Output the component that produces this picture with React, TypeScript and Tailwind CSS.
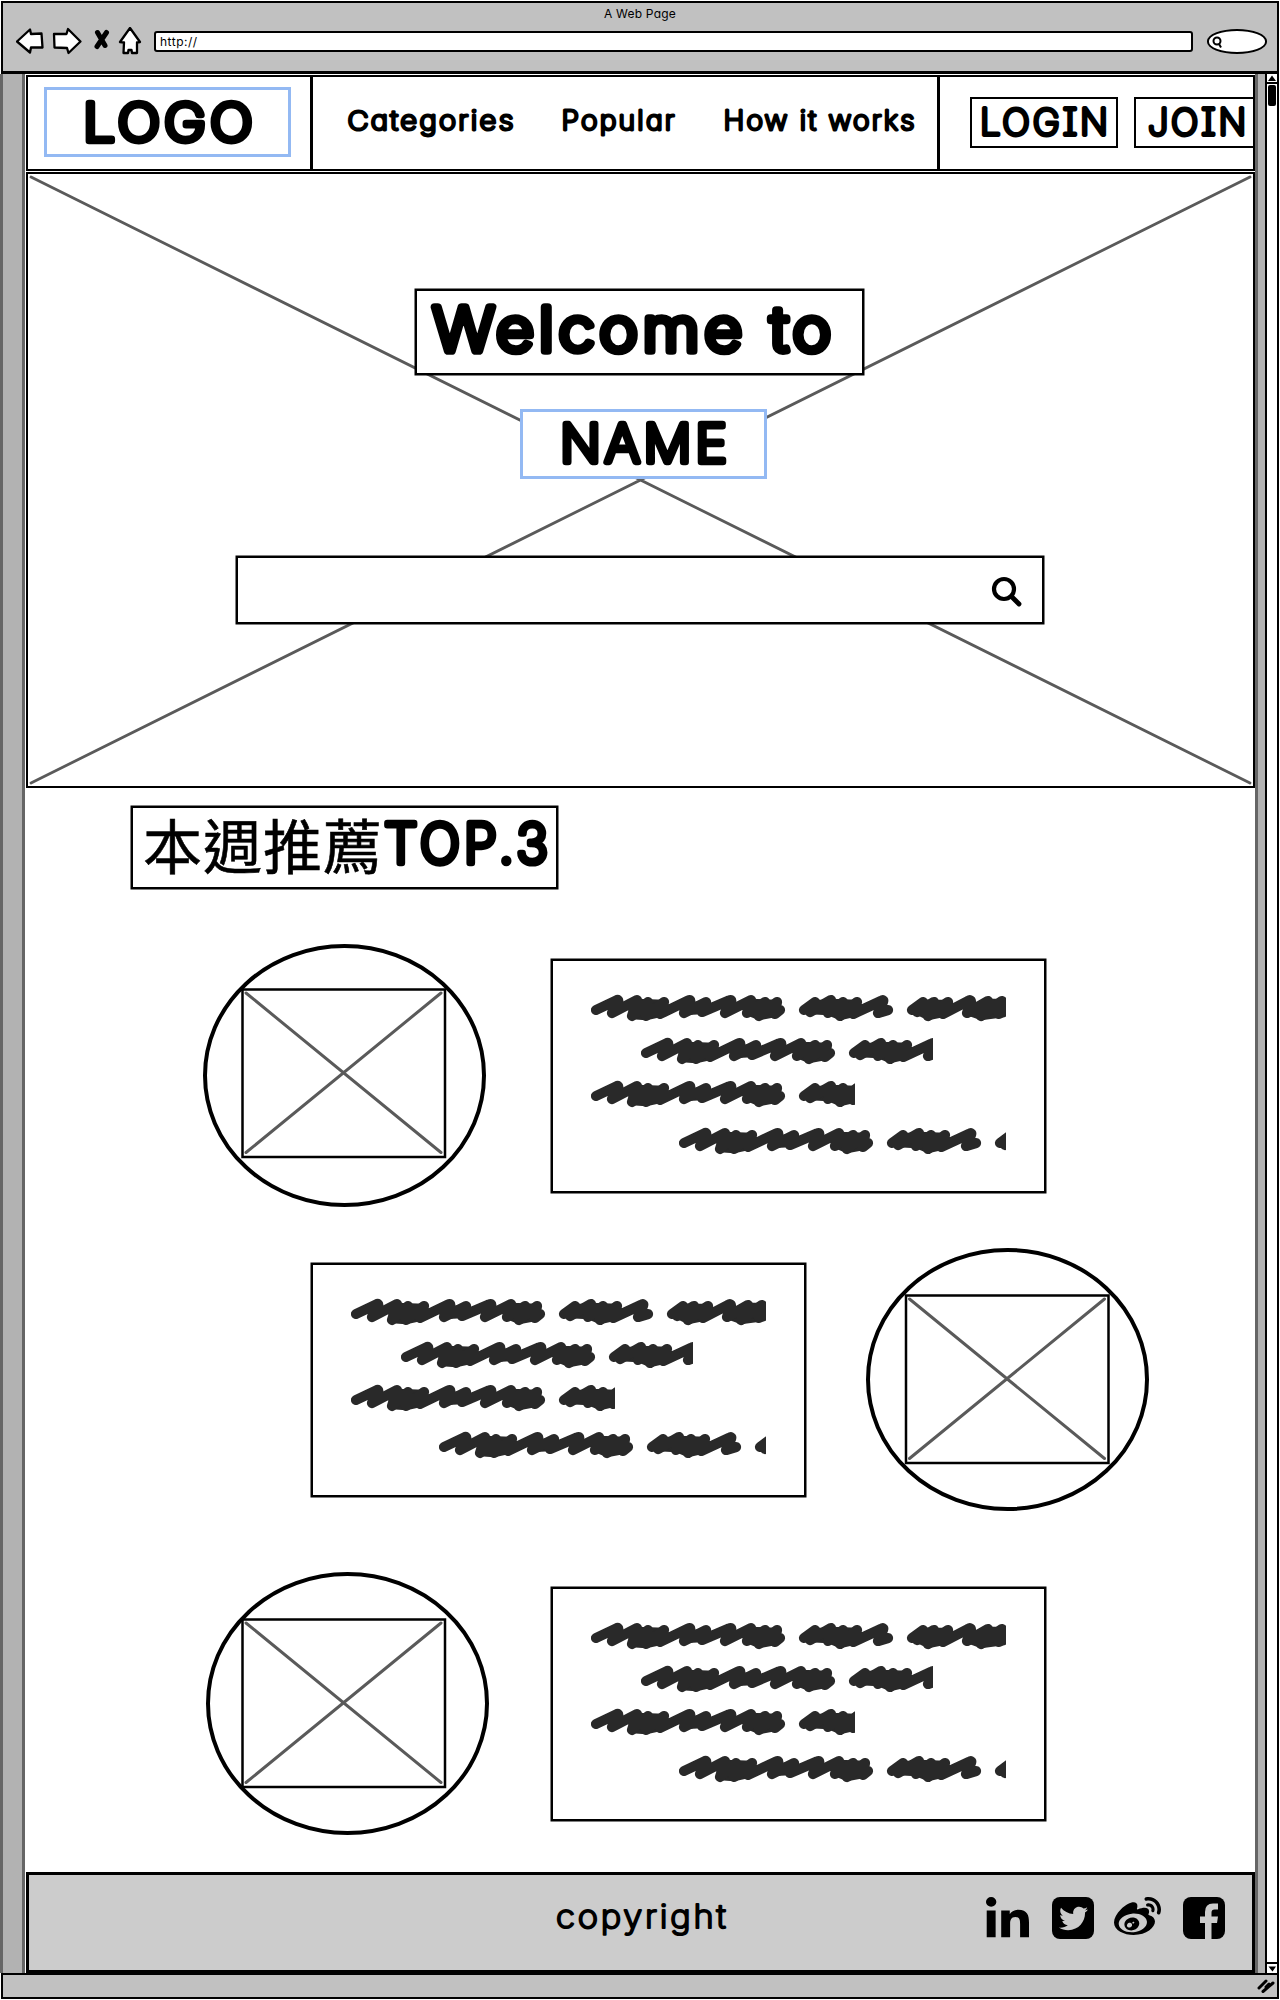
import { FaLinkedinIn, FaTwitter, FaWeibo } from "react-icons/fa";

type LetteringProps = {
  text: string;
  width: number;
  height: number;
  stroke: number;
  serifI?: boolean;
  className?: string;
};

/* Marker-style lettering: a light face thickened by a round pen. Height is the capital height. */
function Lettering({ text, width, height, stroke, serifI, className = "" }: LetteringProps) {
  const fontSize = (height - stroke) / 0.727;
  return (
    <svg width={width} height={height} className={`block shrink-0 overflow-visible ${className}`}>
      <text
        x={stroke / 2 - 2}
        y={height - stroke / 2}
        textLength={width - stroke + 4 + fontSize * 0.08}
        lengthAdjust="spacingAndGlyphs"
        letterSpacing={fontSize * 0.08}
        fontSize={fontSize}
        strokeWidth={stroke}
        strokeLinejoin="round"
        strokeLinecap="round"
        className={
          serifI
            ? "fill-black stroke-black font-['Inter',sans-serif] font-extralight [font-feature-settings:'cv11','cv08']"
            : "fill-black stroke-black font-['Inter',sans-serif] font-extralight [font-feature-settings:'cv11']"
        }
      >
        {text}
      </text>
    </svg>
  );
}

const scribble =
  "M5 17L25 7.500Q28 6 27 9L21 20L46 7L41 23L57 9L55 23L73 9L69 21L97 7.500Q100 6 99 9L93 20L115 9L111 19L138 7.500Q141 6 140 9L134 20L160 7L156 20L174 9L168 23L186 9L184 21L189 17" +
  "M213 17L224 9L219 19L240 7L237 20L252 9L249 23L266 9L262 21L290 8Q293 6 292 9L287 20L297 17" +
  "M321 17L332 9L326 19L343 9L337 23L357 9L352 21L377 8Q380 6 380 9L376 20L397 8L390 23L411 8L408 21L413 18";

const scribbleFill =
  "M41 24L46 8L73 9L69 22L55 25ZM93 20L99 12L115 9L111 19ZM156 20L160 8L186 9L189 17L184 22L168 25Z" +
  "M213 17L224 9L240 9L237 20L219 19ZM237 20L240 8L266 9L262 22L249 25Z" +
  "M321 17L332 9L357 9L352 22L337 25ZM376 20L384 14L397 8L413 8V22L390 25Z";

function Scribble({ width, className = "" }: { width: number; className?: string }) {
  return (
    <svg width={width} height={30} className={`block overflow-hidden ${className}`}>
      <path d={scribbleFill} fill="#292929" stroke="#292929" strokeWidth={4.5} strokeLinejoin="round" />
      <path d={scribble} fill="none" stroke="#292929" strokeWidth={10.2} strokeLinecap="round" strokeLinejoin="round" />
    </svg>
  );
}

function TextCard() {
  return (
    <div className="h-[234px] w-[495px] border-[2.500px] border-black bg-white pt-[32px] pl-[38px] ring-[0.5px] ring-black">
      <Scribble width={415} />
      <Scribble width={292} className="mt-[13px] ml-[50px]" />
      <Scribble width={264} className="mt-[13px]" />
      <Scribble width={327} className="mt-[17px] ml-[88px]" />
    </div>
  );
}

function Photo({ x, y }: { x: number; y: number }) {
  return (
    <svg width="284" height="263" className="block shrink-0" fill="none">
      <ellipse cx="141.500" cy="131.500" rx="139.500" ry="129.500" stroke="#000" strokeWidth="4" />
      <g transform={`translate(${x} ${y})`}>
        <rect x="1.500" y="1.500" width="202.500" height="167.500" fill="#fff" stroke="#000" strokeWidth="2.500" />
        <path d="M5 5L200 164.500M200 5L5 164.500" stroke="#5a5a5a" strokeWidth="3" strokeLinecap="round" />
      </g>
    </svg>
  );
}

function BrowserBar() {
  return (
    <div className="flex h-[73px] flex-col border-2 border-b-[3px] border-black bg-[#c1c1c1]">
      <div className="flex h-[24px] items-start justify-center pt-[2px] font-['Inter',sans-serif] text-[12px] leading-[18px] tracking-[0.2px] text-black [font-feature-settings:'cv11']">
        A Web Page
      </div>
      <div className="flex h-[30px] pl-[13px]">
        <svg width="128" height="30" viewBox="16 23 128 30" fill="#fff" stroke="#000" strokeWidth="2.300" strokeLinejoin="round" strokeLinecap="round">
          <path d="M17 37.500L30 25.500L31 30L41.500 29.500L42.500 43.500L31 43.500L30 48.500Z" />
          <path d="M54 30L66.500 30L68 25L80.500 37.500L68.500 49L67 44L54.500 43.500Z" />
          <path d="M97.500 28.500L105 41.500M106.500 28.500L97 42.500" strokeWidth="5" />
          <path d="M130 24L120 38L124 38.500L123.500 49L128 49L128.500 46L131.500 46L132 49L137 49L137 38.500L140 38Z" />
        </svg>
        <div className="mt-[4px] ml-[10px] flex h-[21px] w-[1039px] items-center rounded-[3px] border-2 border-black bg-white pl-[4px] font-['Inter',sans-serif] text-[12px] leading-[14px] tracking-[0.5px] text-black">
          http://
        </div>
        <div className="mt-[2px] ml-[14px] flex h-[25px] w-[60px] items-center rounded-[50%/48%] border-2 border-black bg-white pl-[2px]">
          <svg width="12" height="14" fill="none" stroke="#000" strokeWidth="2">
            <circle cx="6" cy="6" r="3.500" />
            <path d="M8 9L10 12.500" />
          </svg>
        </div>
      </div>
    </div>
  );
}

function Header() {
  return (
    <header className="flex h-[96px] border-[2.500px] border-black bg-white">
      <div className="flex w-[285px] border-r-[3px] border-black pt-[10px] pl-[16px]">
        <div className="flex h-[70px] w-[247px] justify-center border-[3px] border-[#93b9f3] pt-[10px]">
          <Lettering text="LOGO" width={172} height={44} stroke={6.5} />
        </div>
      </div>
      <nav className="flex w-[628px] items-start border-r-[3px] border-black pt-[32px] pl-[35px]">
        <Lettering text="Categories" width={165} height={22} stroke={2.8} />
        <Lettering text="Popular" width={112} height={22} stroke={2.8} className="ml-[49px]" />
        <Lettering text="How it works" width={190} height={22} stroke={2.8} className="ml-[50px]" />
      </nav>
      <div className="flex grow pt-[20px] pl-[30px]">
        <div className="flex h-[51px] w-[148px] justify-center border-[2.500px] border-black pt-[8px]">
          <Lettering text="LOGIN" width={128} height={30} stroke={3.8} serifI />
        </div>
        <div className="-mr-[2px] ml-[16px] flex h-[51px] w-[121px] shrink-0 border-[2.500px] border-black pt-[8px] pl-[12px]">
          <Lettering text="JOIN" width={98} height={30} stroke={3.8} serifI />
        </div>
      </div>
    </header>
  );
}

function Hero() {
  return (
    <section className="relative mt-[1px] flex h-[616px] flex-col items-center border-[2.500px] border-black bg-white pt-[115px] pr-[2px]">
      <svg className="absolute inset-0 h-full w-full" viewBox="0 0 1224 612" preserveAspectRatio="none" fill="none" stroke="#5a5a5a" strokeWidth="2.800" strokeLinecap="round">
        <path d="M3 3L1221 609M1221 3L3 609" />
      </svg>
      <div className="relative h-[86px] w-[449px] border-[2.500px] border-black bg-white pt-[12px] pl-[14px] ring-[0.5px] ring-black">
        <Lettering text="Welcome to" width={402} height={52} stroke={7.7} />
      </div>
      <div className="relative mt-[34px] ml-[7px] flex h-[70px] w-[247px] justify-center border-[3px] border-[#93b9f3] bg-white pt-[9px]">
        <Lettering text="NAME" width={169} height={44} stroke={6.5} />
      </div>
      <div className="relative mt-[77px] flex h-[68px] w-[808px] items-center justify-end border-[2.500px] border-black bg-white pt-[3px] pr-[20px] ring-[0.5px] ring-black">
        <svg width="31" height="31" fill="none" stroke="#000" strokeWidth="4.200">
          <circle cx="13" cy="13" r="10" />
          <path d="M20.500 20.500L28 28" strokeWidth="4.800" strokeLinecap="round" />
        </svg>
      </div>
    </section>
  );
}

function Footer() {
  return (
    <footer className="flex h-[101px] border-[3px] border-black bg-[#ccc] text-black">
      <div className="flex w-[957px] pt-[28px] pl-[528px]">
        <Lettering text="copyright" width={168} height={26} stroke={2.2} />
      </div>
      <div className="flex items-start pt-[22px]">
        <FaLinkedinIn className="h-[46px] w-[43px]" preserveAspectRatio="none" />
        <div className="ml-[23px] flex size-[42px] items-center justify-center rounded-[8px] bg-black">
          <FaTwitter className="size-[29px] text-[#ccc]" />
        </div>
        <FaWeibo className="-mt-[3px] ml-[19px] h-[47px] w-[49px]" />
        <svg width="42" height="42" className="ml-[21px] block">
          <rect width="42" height="42" rx="8" fill="#000" />
          <path d="M22 42V26H17V19.500H22V15Q22 6.500 30 6.500H35V12.500H31.500Q28.500 12.500 28.500 15.500V19.500H35L34 26H28.500V42Z" fill="#ccc" />
        </svg>
      </div>
    </footer>
  );
}

export default function App() {
  return (
    <div className="flex h-[2000px] w-[1280px] flex-col bg-white pt-[1px] pl-px">
      <div className="w-[1278px]">
        <BrowserBar />
      </div>
      <div className="-ml-px flex h-[1899px]">
        <div className="w-[25px] shrink-0 border-x-[3px] border-[#666] bg-[#b2b2b2]" />
        <main className="ml-px flex w-[1229px] shrink-0 flex-col pt-[1px]">
          <Header />
          <Hero />
          <div className="mt-[18px] ml-[105px] flex h-[83px] w-[427px] border-[2.500px] border-black pt-[6px] pl-[10px] ring-[0.5px] ring-black">
            <span className="font-['Noto_Sans_CJK_TC',sans-serif] text-[59px] leading-[60px] text-black [-webkit-text-stroke:0.6px_black] tracking-[1px]">本週推薦</span>
            <Lettering text="TOP.3" width={166} height={46} stroke={6.5} className="mt-[6px]" />
          </div>
          <div className="mt-[55px] ml-[177px] flex items-start">
            <Photo x={38} y={44} />
            <div className="mt-[15px] ml-[64px]">
              <TextCard />
            </div>
          </div>
          <div className="mt-[41px] ml-[285px] flex items-start">
            <div className="mt-[15px]">
              <TextCard />
            </div>
            <div className="ml-[60px]">
              <Photo x={38.5} y={46} />
            </div>
          </div>
          <div className="mt-[61px] ml-[180px] flex items-start">
            <Photo x={35} y={46} />
            <div className="mt-[15px] ml-[61px]">
              <TextCard />
            </div>
          </div>
          <div className="mt-auto">
            <Footer />
          </div>
        </main>
        <div className="w-[10px] shrink-0 border-l-[3px] border-[#666] bg-[#b2b2b2]" />
        <div className="flex w-[14px] shrink-0 flex-col border-x-2 border-black bg-white">
          <svg width="10" height="10" className="shrink-0 border-b-2 border-black">
            <path d="M1 7L5 1.500L9 7Z" />
          </svg>
          <div className="mx-px mt-[1px] h-[21px] rounded-[2px] bg-black" />
          <svg width="10" height="11" className="mt-auto shrink-0 border-t-2 border-black">
            <path d="M1.500 2.500L9 2.500L5.500 7.500Z" />
          </svg>
        </div>
      </div>
      <div className="flex h-[26px] w-[1278px] items-center justify-end border-2 border-black bg-[#c1c1c1] pr-[2px]">
        <svg width="18" height="16" stroke="#000" strokeWidth="3" strokeLinecap="round">
          <path d="M2 10L9 3M6 13.500L16 5M9 9L12 6" />
        </svg>
      </div>
    </div>
  );
}
